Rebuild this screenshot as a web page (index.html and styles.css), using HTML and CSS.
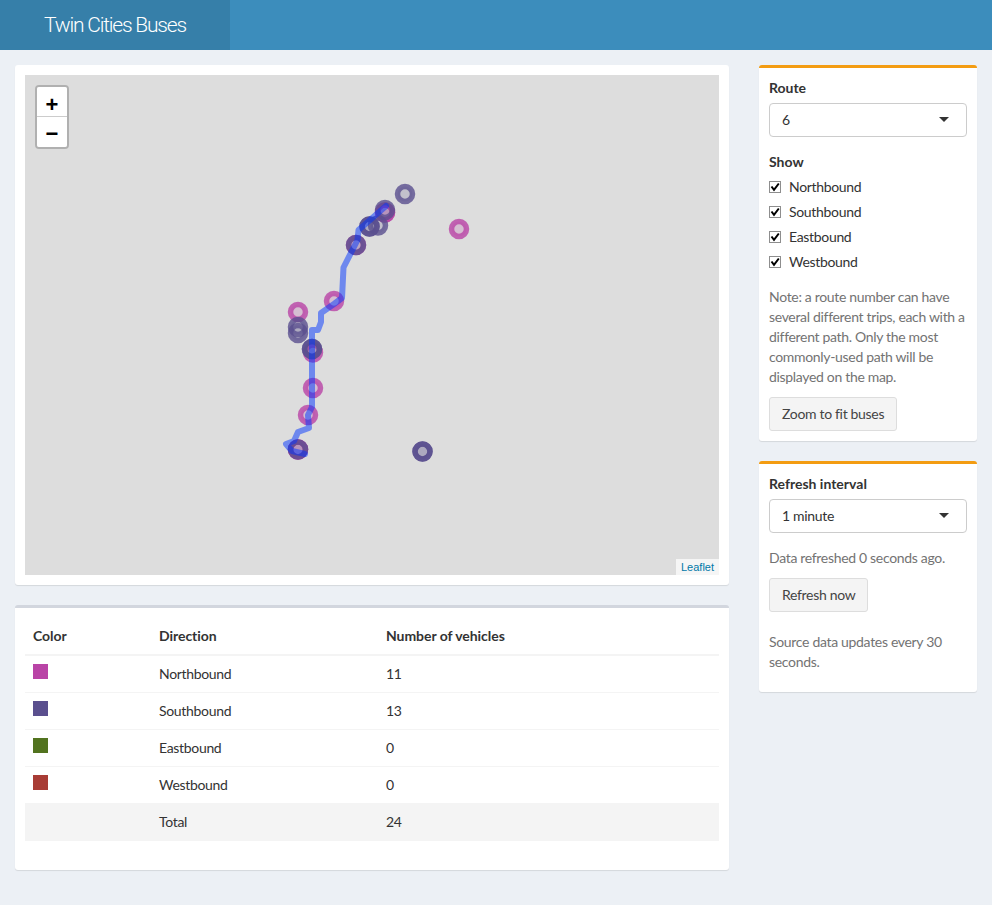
FILE: index.html
```html
<!DOCTYPE html>
<html lang="en">
<head>
<meta charset="utf-8">
<title>Twin Cities Buses</title>
<link rel="stylesheet" href="styles.css">
</head>
<body>
<header class="topbar">
  <div class="logo">Twin Cities Buses</div>
</header>
<main class="content">
  <div class="col-main">
    <section class="box map-box">
      <div class="map">
        <svg class="map-layer" width="694" height="500" viewBox="25 75 694 500">
          <g class="north">
            <circle cx="459" cy="229" r="7.5"/>
            <circle cx="385" cy="212.5" r="7.5"/>
            <circle cx="385" cy="212.5" r="7.5"/>
            <circle cx="356" cy="245" r="7.5"/>
            <circle cx="334" cy="301" r="7.5"/>
            <circle cx="298" cy="312" r="7.5"/>
            <circle cx="313" cy="352.5" r="7.5"/>
            <circle cx="313" cy="388" r="7.5"/>
            <circle cx="308" cy="415" r="7.5"/>
            <circle cx="298" cy="449.5" r="7.5"/>
            <circle cx="298" cy="449.5" r="7.5"/>
          </g>
          <g class="south">
            <circle cx="405" cy="194" r="7.5"/>
            <circle cx="385" cy="210" r="7.5"/>
            <circle cx="378" cy="225.5" r="7.5"/>
            <circle cx="369.5" cy="226.5" r="7.5"/>
            <circle cx="369.5" cy="226.5" r="7.5"/>
            <circle cx="356" cy="245" r="7.5"/>
            <circle cx="298" cy="327" r="7.5"/>
            <circle cx="298" cy="333" r="7.5"/>
            <circle cx="312" cy="349" r="7.5"/>
            <circle cx="312" cy="349" r="7.5"/>
            <circle cx="298" cy="449.5" r="7.5"/>
            <circle cx="422.5" cy="451.5" r="7.5"/>
            <circle cx="422.5" cy="451.5" r="7.5"/>
          </g>
          <path class="route" d="M386 206 L358.5 230 L357.5 240 L343.5 267.5 L342 298 L334 304 L321 313 L321 322 L318 330 L312 330 L312 407 L308 415 L309 428 L298 432 L294 441 L286 444 L292 451 L305 454"/>
        </svg>
        <div class="zoom-control">
          <a class="zoom-btn zoom-in">+</a>
          <a class="zoom-btn zoom-out">&#8722;</a>
        </div>
        <div class="attribution"><a>Leaflet</a></div>
      </div>
    </section>
    <section class="box table-box">
      <table class="vehicles">
        <thead>
          <tr><th class="c-color">Color</th><th class="c-dir">Direction</th><th>Number of vehicles</th></tr>
        </thead>
        <tbody>
          <tr><td><span class="swatch s-north"></span></td><td>Northbound</td><td>11</td></tr>
          <tr><td><span class="swatch s-south"></span></td><td>Southbound</td><td>13</td></tr>
          <tr><td><span class="swatch s-east"></span></td><td>Eastbound</td><td>0</td></tr>
          <tr><td><span class="swatch s-west"></span></td><td>Westbound</td><td>0</td></tr>
          <tr class="total"><td></td><td>Total</td><td>24</td></tr>
        </tbody>
      </table>
    </section>
  </div>
  <aside class="col-side">
    <section class="box side-box">
      <div class="field-label">Route</div>
      <div class="select">6</div>
      <div class="field-label show-label">Show</div>
      <ul class="checks">
        <li><span class="check"><svg width="10" height="10" viewBox="0 0 10 10"><path d="M1.5 4.5 L4 7.8 L8.8 1.5" /></svg></span>Northbound</li>
        <li><span class="check"><svg width="10" height="10" viewBox="0 0 10 10"><path d="M1.5 4.5 L4 7.8 L8.8 1.5" /></svg></span>Southbound</li>
        <li><span class="check"><svg width="10" height="10" viewBox="0 0 10 10"><path d="M1.5 4.5 L4 7.8 L8.8 1.5" /></svg></span>Eastbound</li>
        <li><span class="check"><svg width="10" height="10" viewBox="0 0 10 10"><path d="M1.5 4.5 L4 7.8 L8.8 1.5" /></svg></span>Westbound</li>
      </ul>
      <p class="help note">Note: a route number can have several different trips, each with a different path. Only the most commonly-used path will be displayed on the map.</p>
      <button class="btn">Zoom to fit buses</button>
    </section>
    <section class="box side-box">
      <div class="field-label">Refresh interval</div>
      <div class="select">1 minute</div>
      <p class="help refreshed">Data refreshed 0 seconds ago.</p>
      <button class="btn">Refresh now</button>
      <p class="help source">Source data updates every 30 seconds.</p>
    </section>
  </aside>
</main>
</body>
</html>
```
FILE: styles.css
```css
* { box-sizing: border-box; }
html, body { margin: 0; padding: 0; }
body {
  height: 905px;
  background: #ecf0f5;
  color: #333;
  font-family: "Lato", "Noto Sans", sans-serif;
  font-size: 14px;
  line-height: 20px;
  letter-spacing: -0.32px;
  overflow: hidden;
}
.topbar { height: 50px; background: #3c8dbc; }
.logo {
  width: 230px;
  height: 50px;
  background: #367fa9;
  color: #fff;
  font-family: "Roboto", "Liberation Sans", sans-serif;
  font-weight: 300;
  font-size: 21px;
  letter-spacing: -1.2px;
  line-height: 50px;
  text-align: center;
}
.content { display: flex; gap: 30px; padding: 15px; }
.col-main { width: 714px; display: flex; flex-direction: column; gap: 20px; }
.col-side { width: 218px; display: flex; flex-direction: column; gap: 20px; }
.box {
  background: #fff;
  border-radius: 3px;
  box-shadow: 0 1px 1px rgba(0,0,0,.1);
}
.map-box { padding: 10px; height: 520px; }
.map { position: relative; height: 500px; background: #ddd; overflow: hidden; }
.map-layer { position: absolute; left: 0; top: 0; }
.north circle { stroke: #b944a6; stroke-opacity: .8; stroke-width: 5.5; fill: #b944a6; fill-opacity: .2; }
.south circle { stroke: #5a4f8e; stroke-opacity: .8; stroke-width: 5.5; fill: #5a4f8e; fill-opacity: .2; }
.route { fill: none; stroke: #0033ff; stroke-opacity: .5; stroke-width: 6; stroke-linejoin: round; stroke-linecap: round; }
.zoom-control {
  position: absolute;
  left: 10px;
  top: 10px;
  width: 34px;
  border: 2px solid rgba(0,0,0,.2);
  border-radius: 4px;
  background-clip: padding-box;
}
.zoom-btn {
  display: block;
  height: 30px;
  background: #fff;
  color: #000;
  font-family: "Liberation Sans", sans-serif;
  font-weight: 700;
  font-size: 22px;
  letter-spacing: 0;
  text-align: center;
}
.zoom-in { line-height: 36px; border-bottom: 1px solid #ccc; border-radius: 2px 2px 0 0; }
.zoom-out { line-height: 33px; border-radius: 0 0 2px 2px; }
.attribution {
  position: absolute;
  right: 0;
  bottom: 0;
  height: 16px;
  padding: 0 5px;
  background: rgba(255,255,255,.7);
  font-family: "Liberation Sans", sans-serif;
  font-size: 11px;
  letter-spacing: 0;
  line-height: 16px;
  color: #0078a8;
}
.table-box { border-top: 3px solid #d2d6de; padding: 10px; height: 265px; }
.vehicles { width: 100%; border-collapse: collapse; border-spacing: 0; }
.vehicles th, .vehicles td { padding: 8px; text-align: left; vertical-align: top; }
.vehicles th { height: 37px; padding-bottom: 7px; border-bottom: 2px solid #f4f4f4; font-weight: 700; letter-spacing: -0.05px; }
.vehicles td { height: 37px; border-top: 1px solid #f4f4f4; }
.vehicles tbody tr:first-child td { border-top: 0; }
.c-color { width: 126px; }
.c-dir { width: 227px; }
.total td { background: #f4f4f4; }
.swatch { display: block; width: 15px; height: 15px; }
.s-north { background: #b944a6; }
.s-south { background: #5a4f8e; }
.s-east { background: #52731f; }
.s-west { background: #a83c35; }
.side-box { border-top: 3px solid #f39c12; padding: 10px; }
.field-label { font-weight: 700; letter-spacing: 0; height: 20px; margin-bottom: 5px; }
.select {
  position: relative;
  width: 198px;
  height: 34px;
  padding: 6px 12px;
  border: 1px solid #ccc;
  border-radius: 4px;
  background: #fff;
}
.select::after {
  content: "";
  position: absolute;
  right: 17px;
  top: 13px;
  border-style: solid;
  border-width: 5px 5px 0 5px;
  border-color: #333 transparent transparent transparent;
}
.show-label { margin-top: 15px; margin-bottom: 2px; }
.checks { list-style: none; margin: 0; padding: 0; }
.checks li { display: flex; align-items: center; gap: 8px; height: 25px; }
.check {
  display: flex;
  align-items: center;
  justify-content: center;
  flex: none;
  width: 12px;
  height: 12px;
  border: 1px solid #8e8e8e;
  background: #fff;
  overflow: hidden;
}
.check svg { flex: none; }
.check path { fill: none; stroke: #000; stroke-width: 2; }
.help { margin: 0; color: #737373; }
.note { margin-top: 13px; margin-bottom: 10px; }
.btn {
  display: block;
  height: 34px;
  padding: 6px 12px;
  border: 1px solid #ddd;
  border-radius: 3px;
  background: #f4f4f4;
  color: #444;
  font: inherit;
  letter-spacing: inherit;
}
.refreshed { margin-top: 15px; margin-bottom: 10px; }
.source { margin-top: 20px; margin-bottom: 10px; }
```
